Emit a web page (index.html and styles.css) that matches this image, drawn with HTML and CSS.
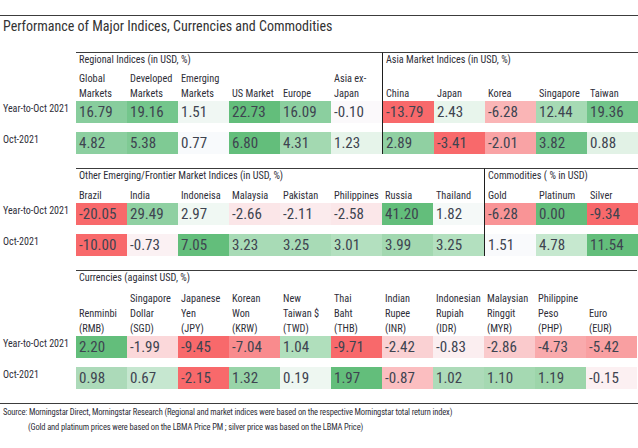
FILE: index.html
```html
<!DOCTYPE html>
<html>
<head>
<meta charset="utf-8">
<link rel="stylesheet" href="styles.css">
</head>
<body>
<div class="title">Performance of Major Indices, Currencies and Commodities</div>

<section class="sec s1">
  <div class="rowlabels"><div class="rl">Year-to-Oct 2021</div><div class="rl">Oct-2021</div></div>
  <div class="group">
    <div class="ghead">Regional Indices (in USD, %)</div>
    <div class="cols">
      <div class="col">Global<br>Markets</div>
      <div class="col">Developed<br>Markets</div>
      <div class="col">Emerging<br>Markets</div>
      <div class="col">US Market</div>
      <div class="col">Europe</div>
      <div class="col">Asia ex-<br>Japan</div>
    </div>
    <div class="drow">
      <div class="cell" style="background:#88cd9d">16.79</div>
      <div class="cell" style="background:#74c68c">19.16</div>
      <div class="cell" style="background:#f0f7f3">1.51</div>
      <div class="cell" style="background:#63be7b">22.73</div>
      <div class="cell" style="background:#8bcf9f">16.09</div>
      <div class="cell" style="background:#fbf9fb">-0.10</div>
    </div>
    <div class="drow">
      <div class="cell" style="background:#8ccfa0">4.82</div>
      <div class="cell" style="background:#7fca94">5.38</div>
      <div class="cell" style="background:#f8fafc">0.77</div>
      <div class="cell" style="background:#63be7b">6.80</div>
      <div class="cell" style="background:#a3d9b1">4.31</div>
      <div class="cell" style="background:#e6f4ea">1.23</div>
    </div>
  </div>
  <div class="group sep">
    <div class="ghead">Asia Market Indices (in USD, %)</div>
    <div class="cols">
      <div class="col">China</div>
      <div class="col">Japan</div>
      <div class="col">Korea</div>
      <div class="col">Singapore</div>
      <div class="col">Taiwan</div>
    </div>
    <div class="drow">
      <div class="cell" style="background:#f8696b">-13.79</div>
      <div class="cell" style="background:#e8f5ec">2.43</div>
      <div class="cell" style="background:#fab5b6">-6.28</div>
      <div class="cell" style="background:#a6dab4">12.44</div>
      <div class="cell" style="background:#72c58a">19.36</div>
    </div>
    <div class="drow">
      <div class="cell" style="background:#90d0a2">2.89</div>
      <div class="cell" style="background:#f8696b">-3.41</div>
      <div class="cell" style="background:#f9a3a5">-2.01</div>
      <div class="cell" style="background:#6ec287">3.82</div>
      <div class="cell" style="background:#e2f2e6">0.88</div>
    </div>
  </div>
</section>

<section class="sec s2">
  <div class="rowlabels"><div class="rl">Year-to-Oct 2021</div><div class="rl">Oct-2021</div></div>
  <div class="group">
    <div class="ghead">Other Emerging/Frontier Market Indices (in USD, %)</div>
    <div class="cols">
      <div class="col">Brazil</div>
      <div class="col">India</div>
      <div class="col">Indoneisa</div>
      <div class="col">Malaysia</div>
      <div class="col">Pakistan</div>
      <div class="col">Philippines</div>
      <div class="col">Russia</div>
      <div class="col">Thailand</div>
    </div>
    <div class="drow">
      <div class="cell" style="background:#f8696b">-20.05</div>
      <div class="cell" style="background:#8fd0a2">29.49</div>
      <div class="cell" style="background:#f0f8f3">2.97</div>
      <div class="cell" style="background:#fbe6e8">-2.66</div>
      <div class="cell" style="background:#fbebed">-2.11</div>
      <div class="cell" style="background:#fbe7e9">-2.58</div>
      <div class="cell" style="background:#63be7b">41.20</div>
      <div class="cell" style="background:#f5f9f8">1.82</div>
    </div>
    <div class="drow">
      <div class="cell" style="background:#f8696b">-10.00</div>
      <div class="cell" style="background:#fbf1f3">-0.73</div>
      <div class="cell" style="background:#63be7b">7.05</div>
      <div class="cell" style="background:#a8dbb6">3.23</div>
      <div class="cell" style="background:#a8dbb6">3.25</div>
      <div class="cell" style="background:#b3e0bf">3.01</div>
      <div class="cell" style="background:#a2d8b0">3.99</div>
      <div class="cell" style="background:#b3e0bf">3.25</div>
    </div>
  </div>
  <div class="group sep">
    <div class="ghead">Commodities ( % in USD)</div>
    <div class="cols">
      <div class="col">Gold</div>
      <div class="col">Platinum</div>
      <div class="col">Silver</div>
    </div>
    <div class="drow">
      <div class="cell" style="background:#f99496">-6.28</div>
      <div class="cell" style="background:#63be7b">0.00</div>
      <div class="cell" style="background:#f8696b">-9.34</div>
    </div>
    <div class="drow">
      <div class="cell" style="background:#f9fafc">1.51</div>
      <div class="cell" style="background:#c6e8cf">4.78</div>
      <div class="cell" style="background:#63be7b">11.54</div>
    </div>
  </div>
</section>

<section class="sec s3">
  <div class="rowlabels"><div class="rl">Year-to-Oct 2021</div><div class="rl">Oct-2021</div></div>
  <div class="group">
    <div class="ghead">Currencies (against USD, %)</div>
    <div class="cols">
      <div class="col">Renminbi<br>(RMB)</div>
      <div class="col">Singapore<br>Dollar<br>(SGD)</div>
      <div class="col">Japanese<br>Yen<br>(JPY)</div>
      <div class="col">Korean<br>Won<br>(KRW)</div>
      <div class="col">New<br>Taiwan $<br>(TWD)</div>
      <div class="col">Thai<br>Baht<br>(THB)</div>
      <div class="col">Indian<br>Rupee<br>(INR)</div>
      <div class="col">Indonesian<br>Rupiah<br>(IDR)</div>
      <div class="col">Malaysian<br>Ringgit<br>(MYR)</div>
      <div class="col">Philippine<br>Peso<br>(PHP)</div>
      <div class="col">Euro<br>(EUR)</div>
    </div>
    <div class="drow">
      <div class="cell" style="background:#63be7b">2.20</div>
      <div class="cell" style="background:#fbd8da">-1.99</div>
      <div class="cell" style="background:#f8696b">-9.45</div>
      <div class="cell" style="background:#f98b8d">-7.04</div>
      <div class="cell" style="background:#b0dfbc">1.04</div>
      <div class="cell" style="background:#f8696b">-9.71</div>
      <div class="cell" style="background:#fad1d3">-2.42</div>
      <div class="cell" style="background:#fbeef0">-0.83</div>
      <div class="cell" style="background:#facacc">-2.86</div>
      <div class="cell" style="background:#f9aaac">-4.73</div>
      <div class="cell" style="background:#f99fa1">-5.42</div>
    </div>
    <div class="drow">
      <div class="cell" style="background:#acdab9">0.98</div>
      <div class="cell" style="background:#c6e7d0">0.67</div>
      <div class="cell" style="background:#f8696b">-2.15</div>
      <div class="cell" style="background:#98d4a8">1.32</div>
      <div class="cell" style="background:#eef7f1">0.19</div>
      <div class="cell" style="background:#63be7b">1.97</div>
      <div class="cell" style="background:#fbbec0">-0.87</div>
      <div class="cell" style="background:#addbb9">1.02</div>
      <div class="cell" style="background:#a5d9b2">1.10</div>
      <div class="cell" style="background:#9dd5aa">1.19</div>
      <div class="cell" style="background:#fcf0f2">-0.15</div>
    </div>
  </div>
</section>

<footer class="foot">
  <div class="fl">Source: Morningstar Direct, Morningstar Research (Regional and market indices were based on the respective Morningstar total return index)</div>
  <div class="fl indent">(Gold and platinum prices were based on the LBMA Price PM ; silver price was based on the LBMA Price)</div>
</footer>
</body>
</html>
```

FILE: styles.css
```css
* { box-sizing: border-box; }
html, body { margin: 0; padding: 0; background: #ffffff; }
body {
  width: 638px;
  height: 448px;
  overflow: hidden;
  font-family: "Roboto", "Liberation Sans", sans-serif;
  font-stretch: 75%;
  color: #2e2e38;
}

.title {
  margin-top: 15px;
  border-top: 1px solid #3c3c3c;
  padding: 2px 0 0 3px;
  font-size: 14px;
  line-height: 17px;
  color: #333333;
  white-space: nowrap;
}

.sec {
  display: flex;
  align-items: stretch;
  margin-top: 14px;
}
.s1 { margin-top: 17px; }

.rowlabels {
  width: 76px;
  flex: none;
  display: flex;
  flex-direction: column;
  justify-content: flex-end;
  gap: 9px;
}
.rl {
  height: 22px;
  padding: 1px 0 0 3px;
  font-size: 10px;
  line-height: 14px;
  white-space: nowrap;
}

.group {
  border-top: 1px solid #3c3c3c;
  display: flex;
  flex-direction: column;
}
.group.sep { border-left: 1px solid #1e1e1e; }

.ghead {
  height: 14px;
  padding-left: 3px;
  font-size: 10.2px;
  line-height: 14px;
  white-space: nowrap;
}

.cols { display: flex; align-items: flex-end; }
.s1 .cols { height: 34px; }
.s2 .cols { height: 20px; }
.s3 .cols { height: 51px; }

.col {
  width: 51px;
  padding-left: 3px;
  font-size: 10.3px;
  line-height: 15px;
  white-space: nowrap;
}

.drow { display: flex; height: 22px; }
.drow + .drow { margin-top: 9px; }

.cell {
  width: 51px;
  padding-left: 3px;
  font-size: 15px;
  line-height: 22px;
  color: #3e4450;
  white-space: nowrap;
}

.foot {
  margin-top: 14px;
  border-top: 1px solid #3c3c3c;
  padding-top: 1px;
}
.fl {
  padding-left: 3px;
  font-size: 8.5px;
  letter-spacing: -0.15px;
  line-height: 15px;
  white-space: nowrap;
  color: #2e2e38;
}
.fl.indent { padding-left: 28px; }
```
